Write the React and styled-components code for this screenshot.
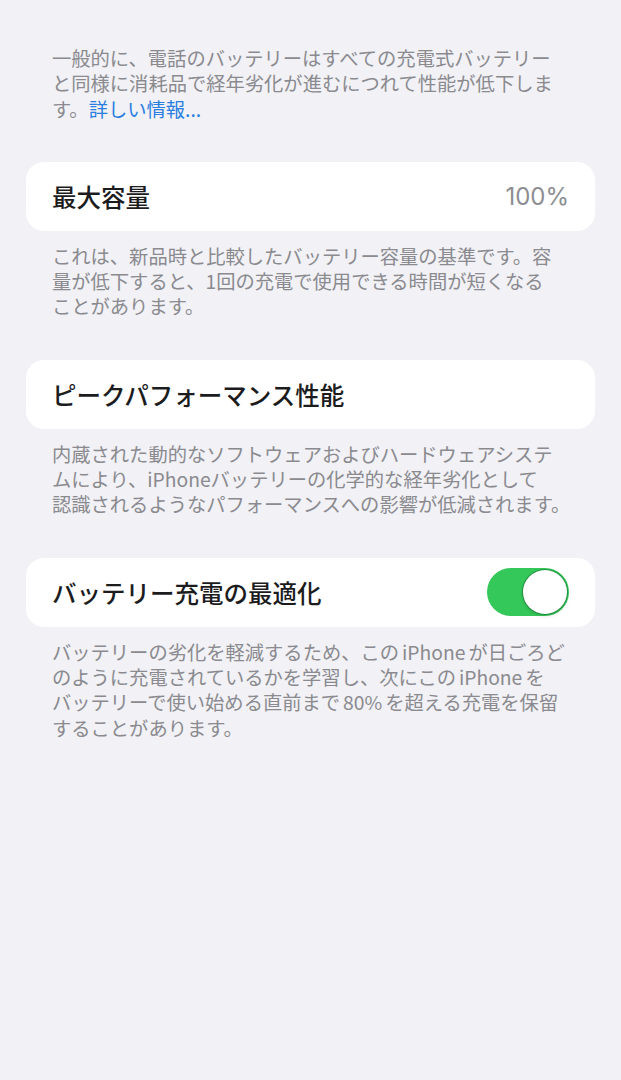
import React, {useState} from 'react';
import styled, {createGlobalStyle} from 'styled-components';

const GlobalStyle = createGlobalStyle`
	html, body {
		margin: 0;
		padding: 0;
		background: #f1f1f6;
	}
	body {
		font-family: "Noto Sans CJK JP", "Noto Sans", sans-serif;
		-webkit-font-smoothing: antialiased;
	}
`

const Page = styled.div`
	min-height: 1080px;
	box-sizing: border-box;
	padding: 46px 26px 0;
	background: #f1f1f6;
`

const Note = styled.p`
	margin: ${props => props.$top ? '12.5px' : '0'} 0 40px;
	padding: 0 26px;
	font-size: 19.3px;
	line-height: 25.3px;
	color: #8a8a8f;
	white-space: nowrap;
`

const Latin = styled.span`
	margin: 0 3px;
`

const Link = styled.a`
	color: #2a7ee0;
	text-decoration: none;
`

const Card = styled.div`
	display: flex;
	align-items: center;
	justify-content: space-between;
	height: 69.5px;
	box-sizing: border-box;
	padding: 0 26px;
	background: #fff;
	border-radius: 18px;
`

const Title = styled.span`
	font-size: 24.5px;
	font-weight: 500;
	color: #1c1c1e;
`

const Value = styled.span`
	font-family: "Inter", "Noto Sans", sans-serif;
	font-size: 24px;
	color: #8d8d92;
`

const Switch = styled.button`
	position: relative;
	width: 82px;
	height: 48px;
	padding: 0;
	border: none;
	border-radius: 24px;
	background: ${props => props.$on ? '#34c759' : '#e5e5ea'};
	cursor: pointer;
	transition: background 0.2s;
`

const Knob = styled.span`
	position: absolute;
	top: 2px;
	left: ${props => props.$on ? '36px' : '2px'};
	width: 44px;
	height: 44px;
	border-radius: 50%;
	background: #fff;
	box-shadow: 0 0 0 1px rgba(0, 60, 20, 0.35), 0 2px 4px rgba(0, 0, 0, 0.12);
	transition: left 0.2s;
`

export default function App() {
	const [optimized, setOptimized] = useState(true);

	return (
		<Page>
			<GlobalStyle/>
			<Note>
				一般的に、電話のバッテリーはすべての充電式バッテリー<br/>
				と同様に消耗品で経年劣化が進むにつれて性能が低下しま<br/>
				す。<Link href="#">詳しい情報...</Link>
			</Note>

			<Card>
				<Title>最大容量</Title>
				<Value>100%</Value>
			</Card>
			<Note $top>
				これは、新品時と比較したバッテリー容量の基準です。容<br/>
				量が低下すると、1回の充電で使用できる時間が短くなる<br/>
				ことがあります。
			</Note>

			<Card>
				<Title>ピークパフォーマンス性能</Title>
			</Card>
			<Note $top>
				内蔵された動的なソフトウェアおよびハードウェアシステ<br/>
				ムにより、iPhoneバッテリーの化学的な経年劣化として<br/>
				認識されるようなパフォーマンスへの影響が低減されます。
			</Note>

			<Card>
				<Title>バッテリー充電の最適化</Title>
				<Switch $on={optimized} onClick={() => setOptimized(!optimized)} aria-label="バッテリー充電の最適化">
					<Knob $on={optimized}/>
				</Switch>
			</Card>
			<Note $top>
				バッテリーの劣化を軽減するため、この<Latin>iPhone</Latin>が日ごろど<br/>
				のように充電されているかを学習し、次にこの<Latin>iPhone</Latin>を<br/>
				バッテリーで使い始める直前まで<Latin>80%</Latin>を超える充電を保留<br/>
				することがあります。
			</Note>
		</Page>
	);
}
